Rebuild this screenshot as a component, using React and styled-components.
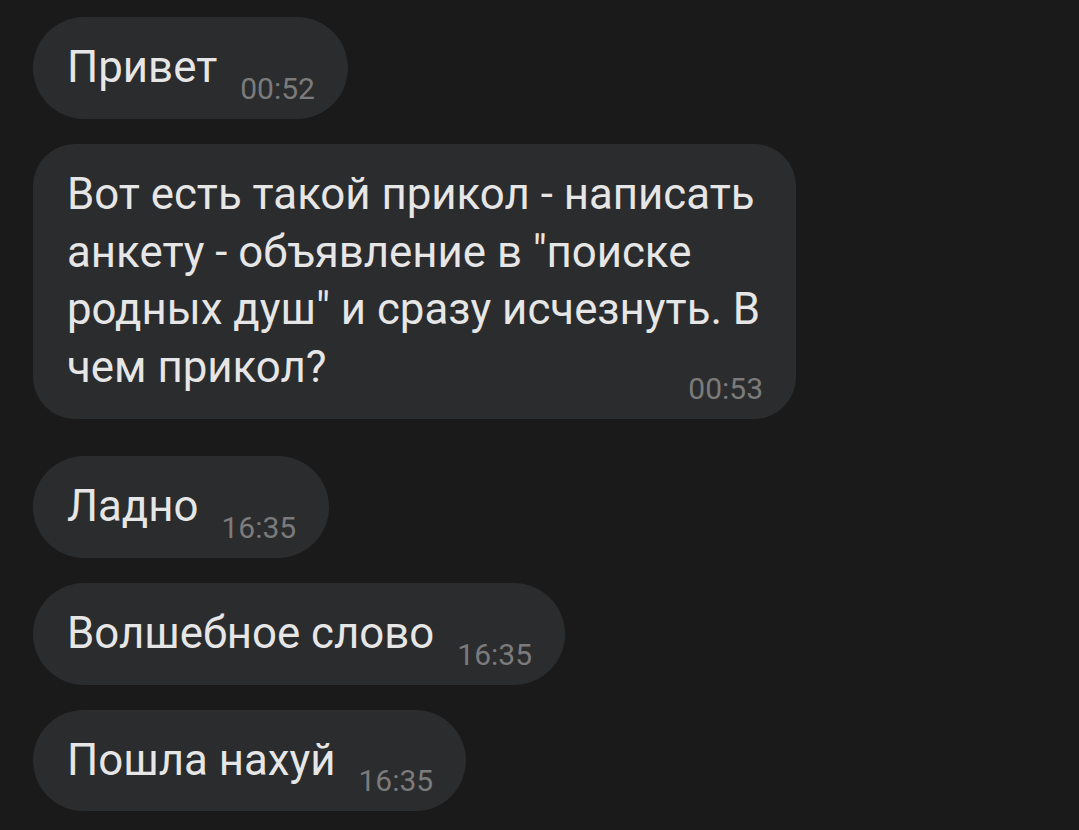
import React from "react";
import styled, { createGlobalStyle } from "styled-components";

const GlobalStyle = createGlobalStyle`
  html, body {
    margin: 0;
    padding: 0;
    background: #1a1a1a;
  }
  body {
    font-family: Roboto, "Noto Sans", sans-serif;
    -webkit-font-smoothing: antialiased;
  }
`;

const Chat = styled.div`
  display: flex;
  flex-direction: column;
  align-items: flex-start;
  padding: 17px 33px 0;
  min-height: 830px;
  box-sizing: border-box;
  background: #1a1a1a;
`;

const Bubble = styled.div`
  display: inline-flex;
  flex-wrap: wrap;
  align-items: flex-end;
  max-width: 763px;
  box-sizing: border-box;
  padding: 22px 33px 15px 34px;
  margin-top: ${(p) => p.$gap}px;
  background: #2b2c2e;
  border-radius: ${(p) => (p.$multi ? 42 : 51)}px;
`;

const Text = styled.div`
  flex: 0 1 auto;
  color: #e6e6e6;
  font-size: 43.8px;
  line-height: 57.8px;
  margin-bottom: 7px;
`;

const Time = styled.span`
  margin-left: auto;
  padding-left: 23px;
  margin-top: -30px;
  color: #7b7b7c;
  font-size: 30px;
  line-height: 30px;
  white-space: nowrap;
`;

const messages = [
  { text: "Привет", time: "00:52", gap: 0 },
  {
    text: 'Вот есть такой прикол - написать анкету - объявление в "поиске родных душ" и сразу исчезнуть. В чем прикол?',
    time: "00:53",
    gap: 25,
    multi: true,
  },
  { text: "Ладно", time: "16:35", gap: 37 },
  { text: "Волшебное слово", time: "16:35", gap: 25 },
  { text: "Пошла нахуй", time: "16:35", gap: 25 },
];

export default function App() {
  return (
    <>
      <GlobalStyle />
      <Chat>
        {messages.map((m, i) => (
          <Bubble key={i} $gap={m.gap} $multi={m.multi}>
            <Text>{m.text}</Text>
            <Time>{m.time}</Time>
          </Bubble>
        ))}
      </Chat>
    </>
  );
}
